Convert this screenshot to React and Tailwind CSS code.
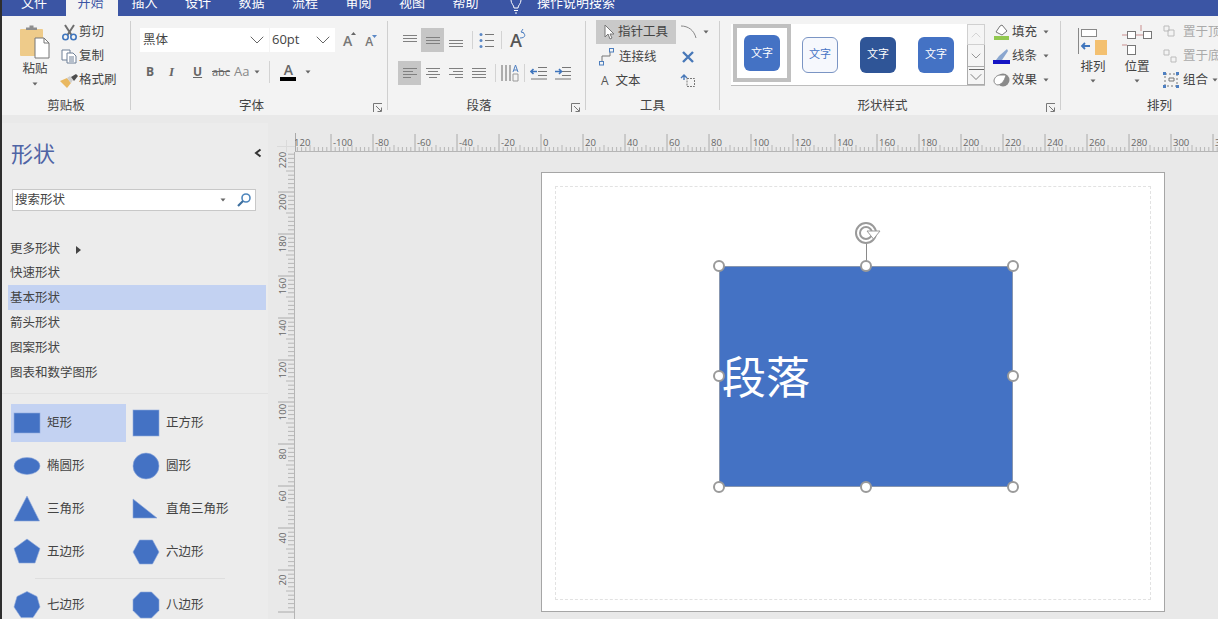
import { ChevronDown, ChevronUp } from "lucide-react";

const tabs = [
  ["文件", "w-[64px]"],
  ["开始", "w-[52px]"],
  ["插入", "w-[53px]"],
  ["设计", "w-[54px]"],
  ["数据", "w-[53px]"],
  ["流程", "w-[54px]"],
  ["审阅", "w-[53px]"],
  ["视图", "w-[54px]"],
  ["帮助", "w-[53px]"],
];

const Caret = () => (
  <svg width="7" height="4" viewBox="0 0 7 4" className="shrink-0">
    <path d="M0.5 0.5h5l-2.5 3z" fill="#666" />
  </svg>
);

const Launcher = () => (
  <svg width="10" height="10" viewBox="0 0 10 10">
    <path d="M0.5 9V0.5H9M3 3l5 5M8.5 4.5v4h-4" fill="none" stroke="#777" />
  </svg>
);

function Group({ w, label, launcher, labelClass = "", sep = true, children }) {
  return (
    <div className={`flex h-full shrink-0 ${w}`}>
      <div className="flex min-w-0 flex-1 flex-col">
        <div className="mt-1 flex h-[72px]">{children}</div>
        <div className="flex h-[23px] items-center pt-[5px]">
          <span className={`flex-1 text-center ${labelClass}`}>{label}</span>
          {launcher && (
            <span className="mr-[3px] flex w-[12px] justify-center pt-1">
              <Launcher />
            </span>
          )}
        </div>
      </div>
      {sep && <div className="my-[5px] w-px bg-[#cfcfcf]" />}
    </div>
  );
}

function Lines({ rows, color = "#808080", size = 16 }) {
  return (
    <svg width={size} height={size} viewBox="0 0 16 16" fill="none" stroke={color}>
      {rows.map(([a, b, y], i) => (
        <path key={i} d={`M${a} ${y}.5H${b}`} />
      ))}
    </svg>
  );
}

const Sep = () => <div className="mx-[5px] my-[3px] h-[18px] w-px bg-[#d3d3d3]" />;

function PasteIcon() {
  return (
    <svg width="32" height="34" viewBox="0 0 32 34">
      <rect x="1" y="4" width="23" height="27" rx="1" fill="#eecb8a" />
      <path d="M7 5V2.5h3.5V0.5h4v2H18V5z" fill="#8e8e8e" />
      <path d="M16 13h9l5 5v15H16z" fill="#fff" stroke="#777" />
      <path d="M25 13v5h5" fill="none" stroke="#777" />
    </svg>
  );
}

function ScissorsIcon() {
  return (
    <svg width="17" height="17" viewBox="0 0 17 17" fill="none">
      <path d="M4 1l6.5 10M13 1L6.5 11" stroke="#6e6e6e" strokeWidth="2" />
      <circle cx="4.5" cy="13" r="2.7" stroke="#3f75bd" strokeWidth="1.6" />
      <circle cx="12.5" cy="13" r="2.7" stroke="#3f75bd" strokeWidth="1.6" />
    </svg>
  );
}

function CopyIcon() {
  return (
    <svg width="17" height="15" viewBox="0 0 17 15" fill="#fff" stroke="#6d7f96">
      <path d="M1 1h8v10H1z" />
      <path d="M6 4h6l3 3v7H6z" />
      <path d="M8 8h5M8 10h5M8 12h5" fill="none" />
    </svg>
  );
}

function BrushIcon() {
  return (
    <svg width="19" height="15" viewBox="0 0 19 15">
      <path d="M0 8l7-3 4 5-4 5z" fill="#e9b860" />
      <path d="M7 5l3-2 3 4-2 3z" fill="#cfcfcf" />
      <path d="M11 4l5-3 2 2-4 5z" fill="#4d4d4d" />
    </svg>
  );
}

function FontGrow({ small, down }) {
  return (
    <span className={`relative font-semibold text-[#777] ${small ? "text-[12px]" : "text-[14px]"}`}>
      A
      <svg width="5" height="3" viewBox="0 0 5 3" className="absolute -right-1 top-0.5">
        <path d={down ? "M0 0h5L2.5 3z" : "M0 3h5L2.5 0z"} fill={down ? "#5a87c5" : "#666"} />
      </svg>
    </span>
  );
}

function ClipboardGroup() {
  return (
    <Group w="w-[129px]" label="剪贴板">
      <div className="ml-[15px] flex w-[36px] flex-col items-center pt-[5px]">
        <PasteIcon />
        <span className="leading-[20px]">粘贴</span>
        <span className="mt-[3px]"><Caret /></span>
      </div>
      <div className="ml-[6px] flex flex-col">
        {[
          ["剪切", <ScissorsIcon key="s" />],
          ["复制", <CopyIcon key="c" />],
          ["格式刷", <BrushIcon key="b" />],
        ].map(([text, icon]) => (
          <div key={text} className="flex h-6 items-center">
            <span className="flex w-[20px] justify-center">{icon}</span>
            <span className="pt-px">{text}</span>
          </div>
        ))}
      </div>
    </Group>
  );
}

function FontGroup() {
  return (
    <Group w="w-[257px]" label="字体" launcher>
      <div className="ml-[9px] flex flex-col">
        <div className="mt-2 flex h-6 items-center">
          <div className="flex h-6 w-[129px] items-center justify-between bg-white pl-[3px]">
            <span className="pt-px">黑体</span>
            <ChevronDown size={24} color="#555" strokeWidth={0.9} />
          </div>
          <div className="ml-px flex h-6 w-[65px] items-center justify-between bg-white pl-[2px]">
            <span className="text-[13px]">60pt</span>
            <ChevronDown size={24} color="#555" strokeWidth={0.9} />
          </div>
          <div className="ml-[8px] flex items-baseline gap-[13px]">
            <FontGrow />
            <FontGrow small down />
          </div>
        </div>
        <div className="mt-2 flex h-6 items-center text-[#666]">
          <span className="w-[23px] pl-[6px] font-['Open_Sans',sans-serif] text-[12px] font-bold">B</span>
          <span className="w-[24px] pl-[6px] font-['Liberation_Serif',serif] text-[13px] font-bold italic">I</span>
          <span className="w-[23px] pl-[6px] font-['Open_Sans',sans-serif] text-[12px] font-bold underline">U</span>
          <span className="w-[23px] pl-[2px] font-['Open_Sans',sans-serif] text-[11px] line-through">abc</span>
          <span className="flex items-center gap-[5px] pl-[1px] font-['Open_Sans',sans-serif] text-[13px] text-[#888]">
            Aa <Caret />
          </span>
          <div className="ml-[8px] h-[22px] w-px bg-[#d3d3d3]" />
          <span className="ml-[8px] flex w-[20px] flex-col items-center font-['Open_Sans',sans-serif] text-[14px] font-semibold leading-[14px]">
            A
            <span className="h-[4px] w-[16px] bg-black" />
          </span>
          <span className="ml-[7px]"><Caret /></span>
        </div>
      </div>
    </Group>
  );
}

function ParaIcon({ active, rows, w = "w-[23px]" }) {
  return (
    <div className={`flex h-6 items-center justify-center ${w} ${active ? "bg-[#c6c6c6]" : ""}`}>
      <Lines rows={rows} />
    </div>
  );
}

const Bullets = () => (
  <svg width="18" height="18" viewBox="0 0 18 18" stroke="#777">
    <path d="M7 3.5h9M7 9.5h9M7 15.5h9" />
    <g fill="#5a87c5" stroke="none">
      <circle cx="3" cy="3.5" r="1.5" />
      <circle cx="3" cy="9.5" r="1.5" />
      <circle cx="3" cy="15.5" r="1.5" />
    </g>
  </svg>
);

const TextDir = () => (
  <svg width="18" height="18" viewBox="0 0 18 18" fill="none">
    <path d="M1 1v16M5 1v16M9 1v16" stroke="#666" />
    <path d="M12 8l2.5-7L17 8M13 6h3" stroke="#4e7fc1" />
    <path d="M12 10h5v7h-5z" stroke="#999" />
  </svg>
);

const Indent = ({ flip }) => (
  <svg width="18" height="14" viewBox="0 0 18 14" fill="none">
    <path d="M8 1.5h9M8 5.5h9M8 9.5h9M1 13h16" stroke="#777" />
    <path d={flip ? "M1 5.5h6M5 3l2.5 2.5L5 8" : "M1 5.5h6M3.5 3L1 5.5 3.5 8"} stroke="#3f75bd" strokeWidth="1.6" />
  </svg>
);

function ParagraphGroup() {
  return (
    <Group w="w-[198px]" label="段落" launcher>
      <div className="ml-[10px] flex flex-col">
        <div className="mt-2 flex h-6 items-center">
          <ParaIcon rows={[[1, 15, 3], [1, 15, 6], [1, 15, 9]]} />
          <ParaIcon active rows={[[1, 15, 5], [1, 15, 8], [1, 15, 11]]} />
          <ParaIcon rows={[[1, 15, 8], [1, 15, 11], [1, 15, 14]]} />
          <Sep />
          <Bullets />
          <Sep />
          <span className="relative ml-[3px] font-['Open_Sans',sans-serif] text-[18px] font-semibold leading-none text-[#555]">
            A
            <svg width="8" height="10" viewBox="0 0 8 10" className="absolute -right-[5px] -top-[2px]">
              <path d="M1 9c6 0 6-4 2-6M4 0L2 3l3 1" fill="none" stroke="#4e7fc1" />
            </svg>
          </span>
        </div>
        <div className="mt-[9px] flex h-6 items-center">
          <ParaIcon active rows={[[1, 15, 3], [1, 11, 6], [1, 15, 9], [1, 9, 12]]} />
          <ParaIcon rows={[[1, 15, 3], [3, 13, 6], [1, 15, 9], [4, 12, 12]]} />
          <ParaIcon rows={[[1, 15, 3], [5, 15, 6], [1, 15, 9], [7, 15, 12]]} />
          <ParaIcon rows={[[1, 15, 3], [1, 15, 6], [1, 15, 9], [1, 15, 12]]} />
          <Sep />
          <TextDir />
          <Sep />
          <Indent />
          <span className="ml-[6px]"><Indent flip /></span>
        </div>
      </div>
    </Group>
  );
}

function ToolsGroup() {
  return (
    <Group w="w-[134px]" label="工具">
      <div className="ml-[10px] flex flex-col">
        <div className="flex h-6 w-[80px] items-center bg-[#c9c9c9]">
          <svg width="13" height="16" viewBox="0 0 13 16" className="ml-[7px] mr-[2px]">
            <path d="M2 1v12l3-3 2 5 2-1-2-4h4z" fill="#fff" stroke="#777" />
          </svg>
          <span className="pt-px">指针工具</span>
        </div>
        <div className="flex h-[25px] items-center">
          <svg width="20" height="18" viewBox="0 0 20 18" className="ml-[1px] mr-[1px]" fill="none" stroke="#4d7ebd">
            <path d="M5 13V8h8V4" stroke="#777" />
            <rect x="2.5" y="13.5" width="4" height="3.5" />
            <rect x="12.5" y="0.5" width="4" height="3.5" />
          </svg>
          <span className="ml-px pt-px">连接线</span>
        </div>
        <div className="flex h-[23px] items-center">
          <span className="ml-[5px] mr-[7px] font-['Open_Sans',sans-serif] text-[12px] text-[#555]">A</span>
          <span className="pt-px">文本</span>
        </div>
      </div>
      <div className="ml-[4px] flex flex-col">
        <div className="flex h-6 items-center">
          <svg width="17" height="14" viewBox="0 0 17 14" fill="none">
            <path d="M1 1c7 0 13 4 15 12" stroke="#888" />
          </svg>
          <span className="ml-[6px]"><Caret /></span>
        </div>
        <div className="flex h-[25px] items-center pl-[2px]">
          <svg width="12" height="12" viewBox="0 0 12 12">
            <path d="M1 1l10 10M11 1L1 11" stroke="#4878b8" strokeWidth="2.4" />
          </svg>
        </div>
        <div className="flex h-[23px] items-center">
          <svg width="17" height="17" viewBox="0 0 17 17" fill="none">
            <path d="M7 6.5h7.5v8H7z" stroke="#777" strokeDasharray="2 1" />
            <path d="M1 6l3-3 3 3M4 3v5" stroke="#4878b8" strokeWidth="1.4" />
          </svg>
        </div>
      </div>
    </Group>
  );
}

function StyleButton({ className }) {
  return (
    <div className={`flex h-[36px] w-[36px] items-center justify-center rounded-md text-[11px] ${className}`}>
      文字
    </div>
  );
}

const FillIcon = () => (
  <svg width="17" height="16" viewBox="0 0 17 16">
    <path d="M3 8l4-6 2-1 5 6-5 4z" fill="#fff" stroke="#777" />
    <path d="M1 12h15v4H1z" fill="#92c850" />
  </svg>
);
const LineIcon = () => (
  <svg width="17" height="16" viewBox="0 0 17 16">
    <path d="M3 12l3-4 8-7 1 2-6 9z" fill="#8aa6cf" />
    <path d="M0 12h17v4H0z" fill="#1414c4" />
  </svg>
);
const EffectIcon = () => (
  <svg width="17" height="14" viewBox="0 0 17 14">
    <circle cx="10" cy="7" r="6.5" fill="#8a8a8a" />
    <path d="M1 8c0-3 3-6 6-6h6c-1 4-3 9-8 10-2 0-4-2-4-4z" fill="#fff" stroke="#888" />
  </svg>
);

function ShapeStyleGroup() {
  return (
    <Group w="w-[341px]" label="形状样式" launcher>
      <div className="ml-[11px] mt-1 flex h-[62px] w-[254px] border-b border-[#bdbdbd] bg-white">
        <div className="-mb-px ml-[2px] flex h-[58px] w-[58px] items-center justify-center border-4 border-[#c0c0c0] bg-white">
          <StyleButton className="bg-[#4472c4] text-white" />
        </div>
        <div className="flex w-[58px] items-center justify-center">
          <StyleButton className="border border-[#7b95c4] bg-[#f6f8fd] text-[#4472c4]" />
        </div>
        <div className="flex w-[58px] items-center justify-center">
          <StyleButton className="bg-[#2f5597] text-white" />
        </div>
        <div className="flex w-[58px] items-center justify-center">
          <StyleButton className="bg-[#4472c4] text-white" />
        </div>
        <div className="ml-auto flex w-[18px] flex-col">
          <div className="flex h-[21px] items-center justify-center border border-[#d0d0d0] bg-[#f5f5f5]">
            <ChevronUp size={22} color="#c4c4c4" strokeWidth={1} />
          </div>
          <div className="flex h-[21px] items-center justify-center border-x border-[#ababab] bg-[#f5f5f5]">
            <ChevronDown size={22} color="#666" strokeWidth={1} />
          </div>
          <div className="flex h-[19px] flex-col items-center overflow-hidden border border-[#ababab] bg-[#f5f5f5]">
            <div className="mt-[2px] h-px w-[15px] shrink-0 bg-[#666]" />
            <ChevronDown size={20} color="#666" strokeWidth={1} className="-mt-[3px] shrink-0" />
          </div>
        </div>
      </div>
      <div className="ml-[7px] flex flex-col">
        {[
          ["填充", <FillIcon key="f" />],
          ["线条", <LineIcon key="l" />],
          ["效果", <EffectIcon key="e" />],
        ].map(([text, icon]) => (
          <div key={text} className="flex h-6 items-center">
            <span className="mr-[2px] flex w-[18px] justify-center">{icon}</span>
            <span className="pt-px">{text}</span>
            <span className="ml-[6px]"><Caret /></span>
          </div>
        ))}
      </div>
    </Group>
  );
}

function ArrangeGroup() {
  return (
    <Group w="w-[157px]" label="排列" labelClass="pl-[40px]" sep={false}>
      <div className="ml-[17px] flex w-[30px] shrink-0 flex-col items-center pt-[6px]">
        <svg width="30" height="30" viewBox="0 0 30 30" fill="none">
          <path d="M0.5 2v26" stroke="#888" />
          <rect x="3.5" y="3.5" width="15" height="7" fill="#fff" stroke="#888" />
          <rect x="17" y="14" width="12" height="15" fill="#f3c070" />
          <path d="M4 20h8M7 17l-3 3 3 3" stroke="#3f75bd" strokeWidth="1.8" />
        </svg>
        <span className="pt-px leading-[20px]">排列</span>
        <span className="mt-[2px]"><Caret /></span>
      </div>
      <div className="ml-[14px] flex w-[30px] shrink-0 flex-col items-center pt-[4px]">
        <svg width="30" height="32" viewBox="0 0 30 32" fill="none" stroke="#777">
          <rect x="5.5" y="7.5" width="8" height="7" fill="#fff" />
          <rect x="21.5" y="7.5" width="8" height="7" fill="#fff" />
          <rect x="5.5" y="21.5" width="8" height="9" fill="#fff" />
          <path d="M0 11h5M14 11h7M19 1v6M0 21h5" stroke="#c98f8f" />
        </svg>
        <span className="pt-px leading-[20px]">位置</span>
        <span className="mt-[2px]"><Caret /></span>
      </div>
      <div className="ml-[11px] flex flex-col whitespace-nowrap">
        <div className="flex h-6 items-center text-[#aaa]">
          <svg width="14" height="14" viewBox="0 0 14 14" className="mr-[6px] shrink-0" fill="none" stroke="#bbb">
            <path d="M1 1h5v5H1zM5 5h6v6H5z" />
          </svg>
          <span className="pt-px">置于顶层</span>
        </div>
        <div className="flex h-6 items-center text-[#aaa]">
          <svg width="14" height="14" viewBox="0 0 14 14" className="mr-[6px] shrink-0" fill="none" stroke="#bbb">
            <path d="M1 1h5v5H1zM8 8h5v5H8z" />
          </svg>
          <span className="pt-px">置于底层</span>
        </div>
        <div className="flex h-6 items-center">
          <svg width="16" height="16" viewBox="0 0 16 16" className="mr-[4px] shrink-0" fill="none">
            <path d="M2 2h12v12H2z" stroke="#777" strokeDasharray="2 2" />
            <path d="M6 6h5v3H6z" stroke="#777" />
            <path d="M0 0h3v3H0zM13 0h3v3h-3zM0 13h3v3H0zM13 13h3v3h-3z" fill="#4e7fc1" />
          </svg>
          <span className="pt-px">组合</span>
          <span className="ml-[4px]"><Caret /></span>
        </div>
      </div>
    </Group>
  );
}

function ShapeIcon({ children }) {
  return (
    <svg width="32" height="32" viewBox="0 0 32 32" fill="#4472c4" stroke="#8faadc" strokeWidth="0.6" className="shrink-0">
      {children}
    </svg>
  );
}

const shapeRows = [
  [
    ["矩形", <rect key="a" x="3" y="6" width="26" height="20" />, true],
    ["正方形", <rect key="b" x="3" y="3" width="26" height="26" />],
  ],
  [
    ["椭圆形", <ellipse key="a" cx="16" cy="16" rx="13" ry="8.5" />],
    ["圆形", <circle key="b" cx="16" cy="16" r="13" />],
  ],
  [
    ["三角形", <polygon key="a" points="16,3 28.5,28 3,28" />],
    ["直角三角形", <polygon key="b" points="3,6 3,25 27,25" />],
  ],
  [
    ["五边形", <polygon key="a" points="16,3 29,12.5 24,27 8,27 3,12.5" />],
    ["六边形", <polygon key="b" points="9.5,4 22.5,4 29,16 22.5,28 9.5,28 3,16" />],
  ],
];

const lastRow = [
  ["七边形", <polygon key="a" points="16,2.5 26,7.5 29,18 22,28.5 10,28.5 3,18 6,7.5" />],
  ["八边形", <polygon key="b" points="10.5,3 21.5,3 29,10.5 29,21.5 21.5,29 10.5,29 3,21.5 3,10.5" />],
];

function ShapeRow({ row }) {
  return (
    <div className="flex h-[43px] items-center pl-[9px]">
      {row.map(([name, icon, active]) => (
        <div
          key={name}
          className={`mr-[4px] flex h-[38px] w-[115px] items-center ${active ? "bg-[#c3d2f2]" : ""}`}
        >
          <ShapeIcon>{icon}</ShapeIcon>
          <span className="ml-[4px] pt-px">{name}</span>
        </div>
      ))}
    </div>
  );
}

function Sidebar() {
  const cats = ["快速形状", "基本形状", "箭头形状", "图案形状", "图表和数学图形"];
  return (
    <aside className="mt-2 flex w-[266px] shrink-0 flex-col overflow-hidden bg-[#ececec] pt-[9px] *:shrink-0">
      <div className="flex h-[44px] items-center justify-between pb-[2px] pl-[9px] pr-[6px]">
        <span className="text-[22px] text-[#4f64a5]">形状</span>
        <svg width="8" height="10" viewBox="0 0 8 10" fill="none">
          <path d="M6.5 1.5L2 5l4.5 3.5" stroke="#333" strokeWidth="2" />
        </svg>
      </div>
      <div className="ml-[10px] mt-[13px] flex h-[22px] w-[244px] items-center justify-between border border-[#c8c8c8] bg-white pl-[2px] pr-[2px]">
        <span className="pt-px">搜索形状</span>
        <div className="flex items-center gap-[9px]">
          <Caret />
          <svg width="16" height="16" viewBox="0 0 16 16" fill="none" className="mr-[1px]">
            <circle cx="10" cy="6" r="4" stroke="#4e86bd" strokeWidth="1.6" />
            <path d="M7 9l-5 5" stroke="#3d6f9e" strokeWidth="2.2" />
          </svg>
        </div>
      </div>
      <div className="mt-[26px] flex h-6 items-center pl-[8px] pt-px">
        更多形状
        <svg width="5" height="8" viewBox="0 0 5 8" className="ml-[16px]">
          <path d="M0 0l5 4-5 4z" fill="#444" />
        </svg>
      </div>
      {cats.map((c, i) => (
        <div
          key={c}
          className={`ml-[6px] mr-[2px] flex items-center pl-[2px] pt-px ${i === 0 ? "h-6" : "h-[25px]"} ${c === "基本形状" ? "bg-[#c3d2f2]" : ""}`}
        >
          {c}
        </div>
      ))}
      <div className="mt-[8px] h-px bg-[#e2e2e2]" />
      <div className="mt-[7px]">
        {shapeRows.map((row, i) => (
          <ShapeRow key={i} row={row} />
        ))}
      </div>
      <div className="ml-[33px] mt-[5px] h-px w-[190px] bg-[#dedede]" />
      <div className="mt-1">
        <ShapeRow row={lastRow} />
      </div>
    </aside>
  );
}

function HRuler() {
  const ticks = [];
  for (let v = -120; v <= 322; v += 2) {
    const x = 246 + v * 2.1;
    const major = v % 20 === 0;
    const mid = v % 10 === 0;
    ticks.push(
      <path key={v} d={`M${x} ${major ? 2 : mid ? 13 : 15}V20`} stroke={major ? "#999" : "#aaa"} strokeWidth="0.8" />
    );
    if (major) {
      ticks.push(
        <text key={`t${v}`} x={x + 2} y="14" fontSize="9.5" fill="#666" fontFamily="Open Sans, sans-serif">
          {v}
        </text>
      );
    }
  }
  return (
    <svg width="923" height="20" viewBox="0 0 923 20" className="block">
      <path d="M0.5 1V20" stroke="#999" strokeWidth="0.8" />
      {ticks}
      <path d="M0 19.5H923" stroke="#b5b5b5" />
    </svg>
  );
}

function VRuler() {
  const ticks = [];
  for (let v = 0; v <= 222; v += 2) {
    const y = 460 - v * 2.1;
    const major = v % 20 === 0;
    const mid = v % 10 === 0;
    ticks.push(
      <path key={v} d={`M${major ? 1 : mid ? 9 : 11} ${y}H18`} stroke={major ? "#999" : "#aaa"} strokeWidth="0.8" />
    );
    if (major && y + 10 > 0) {
      ticks.push(
        <text
          key={`t${v}`}
          x="9"
          y={y + 10}
          fontSize="9.5"
          fill="#666"
          textAnchor="middle"
          fontFamily="Open Sans, sans-serif"
          transform={`rotate(-90 9 ${y + 10})`}
        >
          {v}
        </text>
      );
    }
  }
  return (
    <svg width="18" height="467" viewBox="0 0 18 467" className="block shrink-0">
      {ticks}
      <path d="M17.5 0V467" stroke="#b5b5b5" />
    </svg>
  );
}

function Handle({ className }) {
  return <span className={`absolute z-10 h-[12px] w-[12px] rounded-full border-2 border-[#9a9a9a] bg-white ${className}`} />;
}

function Canvas() {
  return (
    <div className="flex min-w-0 flex-1 flex-col pl-[9px] pt-[17px]">
      <div className="flex">
        <svg width="18" height="20" viewBox="0 0 18 20" className="block shrink-0" stroke="#dadada">
          <path d="M0 14.5H18M9.5 8V20" />
        </svg>
        <HRuler />
      </div>
      <div className="flex min-h-0 flex-1">
        <VRuler />
        <div className="flex-1 pl-[246px] pt-[20px]">
          <div className="h-[440px] w-[624px] border border-[#a6a6a6] bg-white p-[13px]">
            <div className="relative h-[414px] w-[596px] border border-dashed border-[#e2e2e2]">
              {/* selected shape sits free on the page */}
              <div className="absolute left-[163px] top-[79px] flex h-[221px] w-[294px] items-center border border-[#8796b0] bg-[#4472c4]">
                <span className="pl-[2px] text-[44px] leading-none text-white">段落</span>
                <Handle className="-left-[7px] -top-[7px]" />
                <Handle className="left-[140px] -top-[7px]" />
                <Handle className="-right-[7px] -top-[7px]" />
                <Handle className="-left-[7px] top-[103px]" />
                <Handle className="-right-[7px] top-[103px]" />
                <Handle className="-left-[7px] -bottom-[7px]" />
                <Handle className="left-[140px] -bottom-[7px]" />
                <Handle className="-right-[7px] -bottom-[7px]" />
                <span className="absolute left-[146px] -top-[24px] h-[20px] w-px bg-[#8a8a8a]" />
                <svg width="30" height="26" viewBox="0 0 30 26" fill="none" className="absolute left-[134px] -top-[47px]">
                  <circle cx="12" cy="13" r="10" stroke="#9a9a9a" strokeWidth="2" />
                  <circle cx="12" cy="13" r="6" stroke="#9a9a9a" strokeWidth="2" />
                  <path d="M13 11h13l-6.5 8z" fill="#fff" stroke="#9a9a9a" />
                </svg>
              </div>
            </div>
          </div>
        </div>
      </div>
    </div>
  );
}

export default function App() {
  return (
    <div className="flex h-[619px] w-[1218px] overflow-hidden bg-[#2e2e2e] font-['Open_Sans','Noto_Sans_CJK_SC',sans-serif] text-[12.5px] text-[#444]">
      <div className="w-[2px] shrink-0" />
      <div className="flex min-w-0 flex-1 flex-col bg-[#e9e9e9]">
        <div className="flex h-[16px] shrink-0 overflow-hidden bg-[#3b55a4] text-[13px] text-white">
          {tabs.map(([t, w]) => (
            <div
              key={t}
              className={`flex h-[16px] items-end justify-center leading-[22px] ${w} ${t === "开始" ? "bg-[#f3f3f3] pr-[3px] text-[#3b55a4]" : ""}`}
            >
              <span className="mb-[3px]">{t}</span>
            </div>
          ))}
          <svg width="16" height="16" viewBox="0 0 16 16" fill="none" stroke="#fff" className="ml-[16px]">
            <path d="M3 0c0 4 3 5 3 8h4c0-3 3-4 3-8M6 10.5h4M7 13h2" />
          </svg>
          <div className="ml-[13px] flex h-[16px] items-end leading-[22px]">
            <span className="mb-[3px]">操作说明搜索</span>
          </div>
        </div>
        <div className="flex h-[99px] shrink-0 bg-[#f3f3f3]">
          <ClipboardGroup />
          <FontGroup />
          <ParagraphGroup />
          <ToolsGroup />
          <ShapeStyleGroup />
          <ArrangeGroup />
        </div>
        <div className="flex min-h-0 flex-1">
          <Sidebar />
          <Canvas />
        </div>
      </div>
    </div>
  );
}
